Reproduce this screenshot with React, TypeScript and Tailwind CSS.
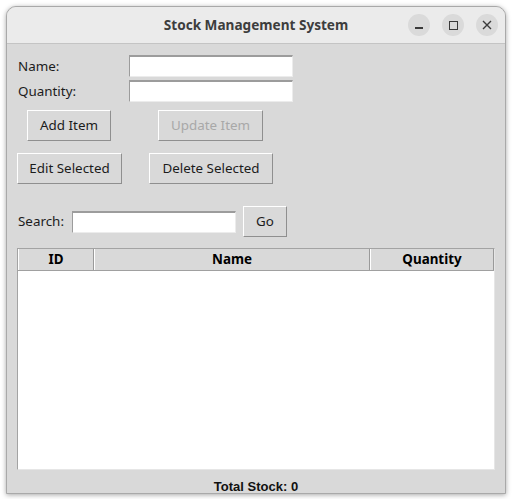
import React from 'react';

const ui = { fontFamily: '"Noto Sans", "Open Sans", sans-serif' };

const Entry = ({ w }: { w: string }) => (
  <div className={`${w} h-[22px] bg-white border-t-2 border-l border-t-[#9c9c9c] border-l-[#9c9c9c] border-b border-r border-b-[#ececec] border-r-[#ececec]`} />
);

const TkButton = ({ label, w, disabled }: { label: string; w: string; disabled?: boolean }) => (
  <div
    className={`${w} h-[31px] flex items-center justify-center text-[13.4px] border-t border-l border-t-white border-l-white border-b border-r border-b-[#8f8f8f] border-r-[#8f8f8f] ${
      disabled ? 'text-[#a8a8a8]' : 'text-[#1c1c1c]'
    }`}
  >
    {label}
  </div>
);

const HeaderCell = ({ label, w }: { label: string; w: string }) => (
  <div className={`${w} h-full flex items-center justify-center font-bold text-[13.4px] text-black border-l border-l-white border-r border-r-[#9a9a9a]`}>
    {label}
  </div>
);

export default function App() {
  return (
    <div className="w-[512px] h-[499px] bg-white overflow-hidden pt-[6px] pl-[6px]" style={ui}>
      <div className="w-[500px] h-[488px] rounded-t-[10px] overflow-hidden flex flex-col bg-[#d9d9d9] border border-[#a9a9a9] shadow-[0_1px_5px_rgba(0,0,0,0.35)]">
        {/* Title bar */}
        <div className="h-[37px] flex-none bg-[#ebebeb] border-b border-[#c4c4c4] flex items-center relative">
          <div className="flex-1 text-center font-bold text-[13.6px] text-[#3d3d3d] pt-[1px]">
            Stock Management System
          </div>
          <div className="absolute right-[7px] top-[7px] flex gap-[12px]">
            <div className="w-[22px] h-[22px] rounded-full bg-[#dadada] flex items-center justify-center">
              <div className="w-[8px] h-[1.5px] bg-[#3a3a3a] mt-[6px]" />
            </div>
            <div className="w-[22px] h-[22px] rounded-full bg-[#dadada] flex items-center justify-center">
              <div className="w-[9px] h-[9px] border border-[#3a3a3a]" />
            </div>
            <div className="w-[22px] h-[22px] rounded-full bg-[#dadada] flex items-center justify-center">
              <svg width="10" height="10" viewBox="0 0 10 10">
                <path d="M1 1L9 9M9 1L1 9" stroke="#3a3a3a" strokeWidth="1.4" />
              </svg>
            </div>
          </div>
        </div>

        {/* Form */}
        <div className="flex-1 flex flex-col text-[13.4px] text-[#1c1c1c] pl-[10px] pr-[10px]">
          <div className="mt-[11px] flex items-center">
            <div className="w-[112px] pl-[1px] pt-[1px]">Name:</div>
            <Entry w="w-[164px]" />
          </div>
          <div className="mt-[3px] flex items-center">
            <div className="w-[112px] pl-[1px] pt-[1px]">Quantity:</div>
            <Entry w="w-[164px]" />
          </div>

          <div className="mt-[8px] flex">
            <div className="ml-[10px]">
              <TkButton label="Add Item" w="w-[84px]" />
            </div>
            <div className="ml-[47px]">
              <TkButton label="Update Item" w="w-[105px]" disabled />
            </div>
          </div>
          <div className="mt-[12px] flex">
            <TkButton label="Edit Selected" w="w-[105px]" />
            <div className="ml-[27px]">
              <TkButton label="Delete Selected" w="w-[124px]" />
            </div>
          </div>

          <div className="mt-[22px] flex items-center">
            <div className="w-[55px] pl-[1px]">Search:</div>
            <Entry w="w-[164px]" />
            <div className="ml-[7px]">
              <TkButton label="Go" w="w-[44px]" />
            </div>
          </div>

          {/* Table */}
          <div className="mt-[11px] h-[222px] flex flex-col bg-white border border-[#a3a3a3] border-r-[#e6e6e6] border-b-[#e6e6e6]">
            <div className="h-[22px] flex bg-[#d9d9d9] border-b border-[#a0a0a0]">
              <HeaderCell label="ID" w="w-[76px]" />
              <HeaderCell label="Name" w="w-[276px]" />
              <HeaderCell label="Quantity" w="flex-1" />
            </div>
            <div className="flex-1" />
          </div>

          <div
            className="mt-[9px] text-center font-bold text-[13px] text-[#111] leading-[15px]"
            style={{ fontFamily: '"Liberation Sans", Arial, sans-serif' }}
          >
            Total Stock: 0
          </div>
        </div>
      </div>
    </div>
  );
}
